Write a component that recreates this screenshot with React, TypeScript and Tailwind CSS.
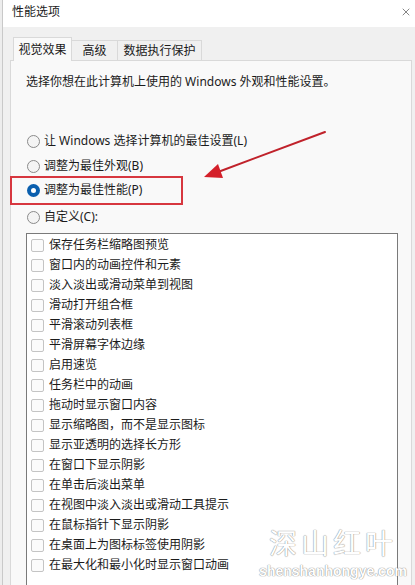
import { X } from 'lucide-react'

const items = [
  '保存任务栏缩略图预览',
  '窗口内的动画控件和元素',
  '淡入淡出或滑动菜单到视图',
  '滑动打开组合框',
  '平滑滚动列表框',
  '平滑屏幕字体边缘',
  '启用速览',
  '任务栏中的动画',
  '拖动时显示窗口内容',
  '显示缩略图，而不是显示图标',
  '显示亚透明的选择长方形',
  '在窗口下显示阴影',
  '在单击后淡出菜单',
  '在视图中淡入淡出或滑动工具提示',
  '在鼠标指针下显示阴影',
  '在桌面上为图标标签使用阴影',
  '在最大化和最小化时显示窗口动画',
]

function Radio({ checked, label, className }: { checked?: boolean; label: string; className?: string }) {
  return (
    <div className={`flex items-center h-[20px] ${className ?? ''}`}>
      {checked ? (
        <span className="w-[13px] h-[13px] rounded-full bg-[#0a5fae] flex items-center justify-center shrink-0">
          <span className="w-[5px] h-[5px] rounded-full bg-white" />
        </span>
      ) : (
        <span className="w-[13px] h-[13px] rounded-full border border-[#8a8a8a] bg-[#f4f4f4] shrink-0" />
      )}
      <span className="ml-[4px]">{label}</span>
    </div>
  )
}

export default function App() {
  return (
    <div className="relative w-[415px] h-[585px] overflow-hidden flex bg-white text-[12px] text-[#1b1b1b] font-['Noto_Sans','Noto_Sans_CJK_SC',sans-serif]">
      {/* sliver of window behind */}
      <div className="w-[3px] shrink-0 bg-[#ededed] border-r border-[#c9c9c9]" />

      <div className="flex-1 flex flex-col min-w-0">
        {/* title bar */}
        <div className="h-[27px] shrink-0 bg-white flex items-start justify-between pl-[9px] pr-[3px] pt-[3px]">
          <span className="leading-[18px]">性能选项</span>
          <X className="w-[12px] h-[12px] mt-[3px] text-[#333]" strokeWidth={1.2} />
        </div>

        <div className="flex-1 bg-[#f0f0f0] flex flex-col pl-[7px] pr-[3px] min-h-0">
          {/* tabs */}
          <div className="h-[33px] shrink-0 flex items-end pl-[3px]">
            <div className="h-[24px] w-[59px] bg-[#f9f9f9] border border-b-0 border-[#d9d9d9] flex items-center justify-center -mb-px relative z-10">
              视觉效果
            </div>
            <div className="h-[20px] w-[46px] border-t border-r border-[#d9d9d9] flex items-center justify-center">
              高级
            </div>
            <div className="h-[20px] w-[84px] border-t border-r border-[#d9d9d9] flex items-center justify-center">
              数据执行保护
            </div>
          </div>

          {/* panel */}
          <div className="flex-1 bg-[#f9f9f9] border border-[#d9d9d9] border-b-0 pl-[15px] pr-[13px] pt-[12px] min-h-0">
            <div className="leading-[18px]">选择你想在此计算机上使用的 Windows 外观和性能设置。</div>

            <div className="mt-[40px] pl-[1px]">
              <Radio label="让 Windows 选择计算机的最佳设置(L)" />
              <Radio label="调整为最佳外观(B)" className="mt-[5px]" />
              <Radio label="调整为最佳性能(P)" checked className="mt-[4px]" />
              <Radio label="自定义(C):" className="mt-[7px]" />
            </div>

            <div className="mt-[6px] bg-white border border-[#7a7a7a] border-b-0 h-[400px] pl-[4px] pt-px">
              {items.map(t => (
                <div key={t} className="flex items-center h-[20px]">
                  <span className="w-[13px] h-[13px] rounded-[2px] border border-[#c4c4c4] bg-[#fbfbfb] shrink-0" />
                  <span className="ml-[5px]">{t}</span>
                </div>
              ))}
            </div>
          </div>
        </div>
      </div>

      {/* annotation: red box */}
      <div className="absolute left-[10px] top-[176px] w-[173px] h-[29px] border-2 border-[#d7373f]" />

      {/* annotation: arrow */}
      <svg className="absolute left-0 top-0 pointer-events-none" width="415" height="585" viewBox="0 0 415 585">
        <line x1="325" y1="132" x2="218" y2="172" stroke="#c0222b" strokeWidth="2" strokeLinecap="round" />
        <polygon points="204,177 218,164 223,178" fill="#d4202a" />
      </svg>

      {/* watermark */}
      <div className="absolute left-[263px] top-[526px] w-[140px] flex flex-col items-center text-white [text-shadow:0_0_1px_#8a8a8a,0_0_1px_#8a8a8a]">
        <span className="text-[28px] leading-[32px] tracking-[4px] [font-family:'Noto_Sans_CJK_SC',sans-serif]">深山红叶</span>
        <span className="text-[14px] leading-[15px] font-bold [font-family:'Liberation_Sans',Arial,sans-serif] mt-[6px]">shenshanhongye.com</span>
      </div>
    </div>
  )
}
